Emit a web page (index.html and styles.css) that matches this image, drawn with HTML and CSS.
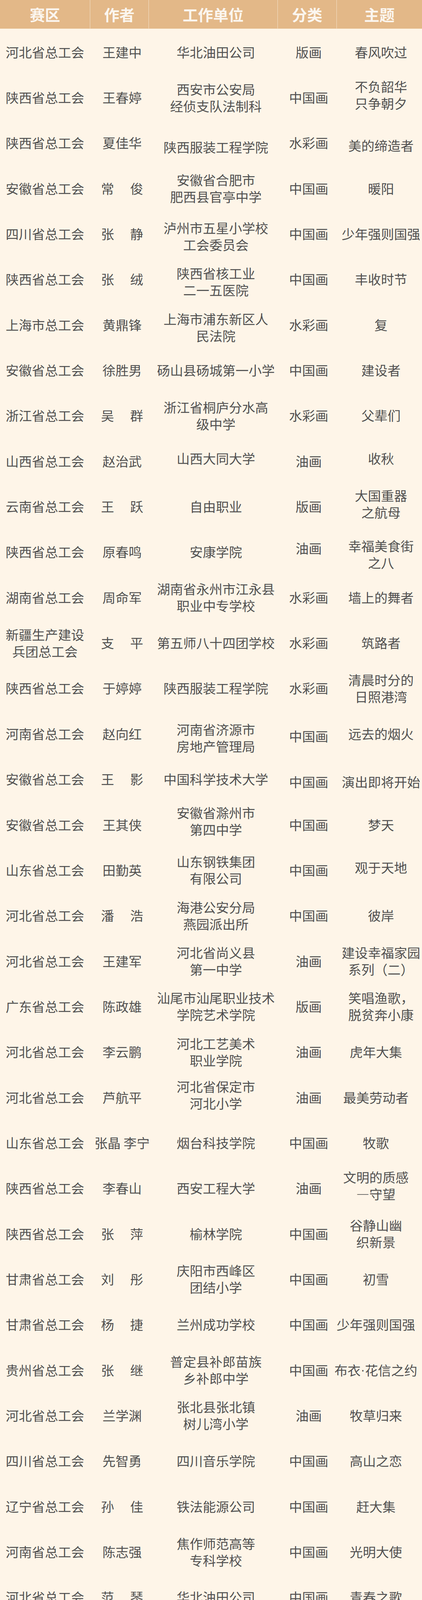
FILE: index.html
```html
<!DOCTYPE html>
<html lang="zh-CN">
<head>
<meta charset="utf-8">
<title>作品名单</title>
<link rel="stylesheet" href="styles.css">
</head>
<body>
<div class="sheet">
  <div class="head">
    <div class="h">赛区</div>
    <div class="h">作者</div>
    <div class="h">工作单位</div>
    <div class="h">分类</div>
    <div class="h">主题</div>
  </div>
  <div class="body">
    <div class="row"><div class="c">河北省总工会</div><div class="c">王建中</div><div class="c">华北油田公司</div><div class="c">版画</div><div class="c c5">春风吹过</div></div>
    <div class="row"><div class="c">陕西省总工会</div><div class="c">王春婷</div><div class="c">西安市公安局<br>经侦支队法制科</div><div class="c">中国画</div><div class="c c5 up">不负韶华<br>只争朝夕</div></div>
    <div class="row"><div class="c">陕西省总工会</div><div class="c">夏佳华</div><div class="c dn2">陕西服装工程学院</div><div class="c">水彩画</div><div class="c c5 dn">美的缔造者</div></div>
    <div class="row"><div class="c">安徽省总工会</div><div class="c">常　 俊</div><div class="c">安徽省合肥市<br>肥西县官亭中学</div><div class="c">中国画</div><div class="c c5">暖阳</div></div>
    <div class="row"><div class="c">四川省总工会</div><div class="c">张　 静</div><div class="c dn">泸州市五星小学校<br>工会委员会</div><div class="c">中国画</div><div class="c c5">少年强则国强</div></div>
    <div class="row"><div class="c">陕西省总工会</div><div class="c">张　 绒</div><div class="c dn">陕西省核工业<br>二一五医院</div><div class="c">中国画</div><div class="c c5">丰收时节</div></div>
    <div class="row"><div class="c">上海市总工会</div><div class="c">黄鼎锋</div><div class="c dn">上海市浦东新区人<br>民法院</div><div class="c">水彩画</div><div class="c c5">复</div></div>
    <div class="row"><div class="c">安徽省总工会</div><div class="c">徐胜男</div><div class="c">砀山县砀城第一小学</div><div class="c">中国画</div><div class="c c5">建设者</div></div>
    <div class="row"><div class="c">浙江省总工会</div><div class="c">吴　 群</div><div class="c">浙江省桐庐分水高<br>级中学</div><div class="c">水彩画</div><div class="c c5">父辈们</div></div>
    <div class="row"><div class="c">山西省总工会</div><div class="c">赵治武</div><div class="c up">山西大同大学</div><div class="c">油画</div><div class="c c5 up">收秋</div></div>
    <div class="row"><div class="c">云南省总工会</div><div class="c">王　 跃</div><div class="c">自由职业</div><div class="c">版画</div><div class="c c5 up">大国重器<br>之航母</div></div>
    <div class="row"><div class="c">陕西省总工会</div><div class="c">原春鸣</div><div class="c">安康学院</div><div class="c up2">油画</div><div class="c c5 dn">幸福美食街<br>之八</div></div>
    <div class="row"><div class="c">湖南省总工会</div><div class="c">周命军</div><div class="c">湖南省永州市江永县<br>职业中专学校</div><div class="c">水彩画</div><div class="c c5">墙上的舞者</div></div>
    <div class="row"><div class="c">新疆生产建设<br>兵团总工会</div><div class="c">支　 平</div><div class="c">第五师八十四团学校</div><div class="c">水彩画</div><div class="c c5">筑路者</div></div>
    <div class="row"><div class="c">陕西省总工会</div><div class="c">于婷婷</div><div class="c">陕西服装工程学院</div><div class="c">水彩画</div><div class="c c5">清晨时分的<br>日照港湾</div></div>
    <div class="row"><div class="c">河南省总工会</div><div class="c">赵向红</div><div class="c dn2">河南省济源市<br>房地产管理局</div><div class="c dn">中国画</div><div class="c c5">远去的烟火</div></div>
    <div class="row"><div class="c">安徽省总工会</div><div class="c">王　 影</div><div class="c">中国科学技术大学</div><div class="c dn">中国画</div><div class="c c5 dn">演出即将开始</div></div>
    <div class="row"><div class="c">安徽省总工会</div><div class="c">王其侠</div><div class="c up2">安徽省滁州市<br>第四中学</div><div class="c">中国画</div><div class="c c5">梦天</div></div>
    <div class="row"><div class="c">山东省总工会</div><div class="c">田勤英</div><div class="c">山东钢铁集团<br>有限公司</div><div class="c">中国画</div><div class="c c5 up">观于天地</div></div>
    <div class="row"><div class="c">河北省总工会</div><div class="c">潘　 浩</div><div class="c">海港公安分局<br>燕园派出所</div><div class="c">中国画</div><div class="c c5">彼岸</div></div>
    <div class="row"><div class="c">河北省总工会</div><div class="c">王建军</div><div class="c">河北省尚义县<br>第一中学</div><div class="c">油画</div><div class="c c5">建设幸福家园<br>系列（二）</div></div>
    <div class="row"><div class="c">广东省总工会</div><div class="c">陈政雄</div><div class="c">汕尾市汕尾职业技术<br>学院艺术学院</div><div class="c">版画</div><div class="c c5">笑唱渔歌，<br>脱贫奔小康</div></div>
    <div class="row s2"><div class="c">河北省总工会</div><div class="c">李云鹏</div><div class="c">河北工艺美术<br>职业学院</div><div class="c">油画</div><div class="c c5">虎年大集</div></div>
    <div class="row s2"><div class="c">河北省总工会</div><div class="c">芦航平</div><div class="c up">河北省保定市<br>河北小学</div><div class="c">油画</div><div class="c c5">最美劳动者</div></div>
    <div class="row s2"><div class="c">山东省总工会</div><div class="c">张晶 李宁</div><div class="c">烟台科技学院</div><div class="c">中国画</div><div class="c c5">牧歌</div></div>
    <div class="row s2"><div class="c">陕西省总工会</div><div class="c">李春山</div><div class="c">西安工程大学</div><div class="c">油画</div><div class="c c5 up">文明的质感<br>—守望</div></div>
    <div class="row s2"><div class="c">陕西省总工会</div><div class="c">张　 萍</div><div class="c">榆林学院</div><div class="c">中国画</div><div class="c c5">谷静山幽<br>织新景</div></div>
    <div class="row s2"><div class="c">甘肃省总工会</div><div class="c">刘　 彤</div><div class="c">庆阳市西峰区<br>团结小学</div><div class="c">中国画</div><div class="c c5">初雪</div></div>
    <div class="row s2"><div class="c">甘肃省总工会</div><div class="c">杨　 捷</div><div class="c">兰州成功学校</div><div class="c">中国画</div><div class="c c5">少年强则国强</div></div>
    <div class="row s2"><div class="c">贵州省总工会</div><div class="c">张　 继</div><div class="c">普定县补郎苗族<br>乡补郎中学</div><div class="c">中国画</div><div class="c c5">布衣<span class="dot">·</span>花信之约</div></div>
    <div class="row s2"><div class="c">河北省总工会</div><div class="c">兰学渊</div><div class="c">张北县张北镇<br>树儿湾小学</div><div class="c">油画</div><div class="c c5">牧草归来</div></div>
    <div class="row s2"><div class="c">四川省总工会</div><div class="c">先智勇</div><div class="c">四川音乐学院</div><div class="c">中国画</div><div class="c c5">高山之恋</div></div>
    <div class="row s2"><div class="c">辽宁省总工会</div><div class="c">孙　 佳</div><div class="c">铁法能源公司</div><div class="c">中国画</div><div class="c c5">赶大集</div></div>
    <div class="row s2"><div class="c">河南省总工会</div><div class="c">陈志强</div><div class="c">焦作师范高等<br>专科学校</div><div class="c">中国画</div><div class="c c5">光明大使</div></div>
    <div class="row s2"><div class="c">河北省总工会</div><div class="c">范　 琴</div><div class="c">华北油田公司</div><div class="c">中国画</div><div class="c c5">青春之歌</div></div>
    <div class="row s2"><div class="c">广东省总工会</div><div class="c">卢虹宇</div><div class="c dn">东莞市松山湖<br>第二小学</div><div class="c">水彩画</div><div class="c c5">斑驳下的文明</div></div>
    <div class="row s2"><div class="c">河北省总工会</div><div class="c">李程昊</div><div class="c">河北科技师范学院</div><div class="c">水彩画</div><div class="c c5">中国天眼之父</div></div>
    <div class="row s2"><div class="c">湖南省总工会</div><div class="c">刘正湘</div><div class="c">湖南省株洲市<br>规划展览馆</div><div class="c">版画</div><div class="c c5">大国工匠</div></div>
    <div class="row s2"><div class="c">湖北省总工会</div><div class="c">张　 渝</div><div class="c">大冶华中学校</div><div class="c">水彩画</div><div class="c c5">山火</div></div>
    <div class="row s2"><div class="c">湖南省总工会</div><div class="c">彭继球</div><div class="c">株洲市天元中学</div><div class="c">油画</div><div class="c c5">工业时光</div></div>
    <div class="row s2"><div class="c">陕西省总工会</div><div class="c">黄晓莲</div><div class="c">陕西服装工程学院</div><div class="c">水彩画</div><div class="c c5">角落系列<br>—电梯2</div></div>
    <div class="row s1"><div class="c">湖北省总工会</div><div class="c">何雪波</div><div class="c">汉口学院艺术<br>设计学院</div><div class="c">中国画</div><div class="c c5">故园蔬果香</div></div>
    <div class="row s1"><div class="c">四川省总工会</div><div class="c">喻桂先</div><div class="c">四川美丰射洪<br>实验学校</div><div class="c">油画</div><div class="c c5">收获的季节<br>—打渔生活</div></div>
    <div class="row s2"><div class="c">陕西省总工会</div><div class="c">杨竹莉</div><div class="c">长安国际信托股<br>份有限公司</div><div class="c">水彩画</div><div class="c c5">咫尺匠心，百<br>年传承</div></div>
    <div class="row"><div class="c">安徽省总工会</div><div class="c">陈　 丽</div><div class="c">合肥山那边酒店服务<br>管理有限公司</div><div class="c">中国画</div><div class="c c5">快乐递</div></div>
    <div class="row"><div class="c">广东省总工会</div><div class="c">李桂恒</div><div class="c">广州市职工书画<br>协会</div><div class="c">油画</div><div class="c c5">我的父亲</div></div>
    <div class="row s2"><div class="c">湖北省总工会</div><div class="c">王铁汉</div><div class="c">武汉纺织大学</div><div class="c">中国画</div><div class="c c5">苍穹中那一抹<br>中国红</div></div>
    <div class="row s1"><div class="c">四川省总工会</div><div class="c">张　 煊</div><div class="c up">四川省玻纤集团<br>有限公司</div><div class="c">中国画</div><div class="c c5">丝路卫士</div></div>
    <div class="row s1"><div class="c">福建省总工会</div><div class="c">童丽仙</div><div class="c up">福建省南平市松溪县<br>龙山路118--1</div><div class="c">版画</div><div class="c c5">擎天</div></div>
    <div class="row s2"><div class="c">新疆维吾尔<br>自治区总工会</div><div class="c">鲍忠远</div><div class="c">新疆油田公司<br>数据公司</div><div class="c">油画</div><div class="c c5">戈壁深处石油<br>人——远望</div></div>
    <div class="row s1"><div class="c">甘肃省总工会</div><div class="c">司　 光</div><div class="c">静宁县城关<br>初级中学</div><div class="c">中国画</div><div class="c c5 dn">筑梦敦煌，复<br>兴中华</div></div>
    <div class="row s2"><div class="c">陕西省总工会</div><div class="c">范勇军</div><div class="c">乾县职业教育中心</div><div class="c">中国画</div><div class="c c5">苹果熟了</div></div>
  </div>
</div>
</body>
</html>
```

FILE: styles.css
```css
* {
  box-sizing: border-box;
}

html,
body {
  margin: 0;
  padding: 0;
  background: #fef5e8;
}

body {
  font-family: "Noto Sans CJK SC", "Noto Sans", sans-serif;
  color: #505050;
}

.sheet {
  width: 1080px;
  height: 6098px;
  overflow: hidden;
  background: #fef5e8;
}

.head {
  display: grid;
  grid-template-columns: 230px 150px 330px 151px 219px;
  height: 74px;
  background: #e3b888;
  border-bottom: 1px solid #f2dcc0;
}

.head .h {
  display: flex;
  align-items: center;
  justify-content: center;
  color: #fbf6ef;
  font-weight: 700;
  font-size: 39px;
  line-height: 1;
  border-left: 1px solid #f3e0c8;
}

.head .h:first-child {
  border-left: none;
}

.row {
  display: grid;
  grid-template-columns: 230px 165px 315px 160px 210px;
  height: 116.35px;
}

.c {
  display: flex;
  align-items: center;
  justify-content: center;
  text-align: center;
  white-space: nowrap;
  font-size: 33.5px;
  line-height: 43px;
}

.dot {
  font-family: "Liberation Sans", "Noto Sans", sans-serif;
}

/* small vertical nudges seen in the source table */
.c.dn {
  padding-top: 13px;
}

.c.dn2 {
  padding-top: 21px;
}

.c.up {
  padding-bottom: 13px;
}

.c.up2 {
  padding-bottom: 19px;
}

.row.s1 .c5 {
  padding-right: 12px;
}

.row.s2 .c5 {
  padding-right: 26px;
}
```
